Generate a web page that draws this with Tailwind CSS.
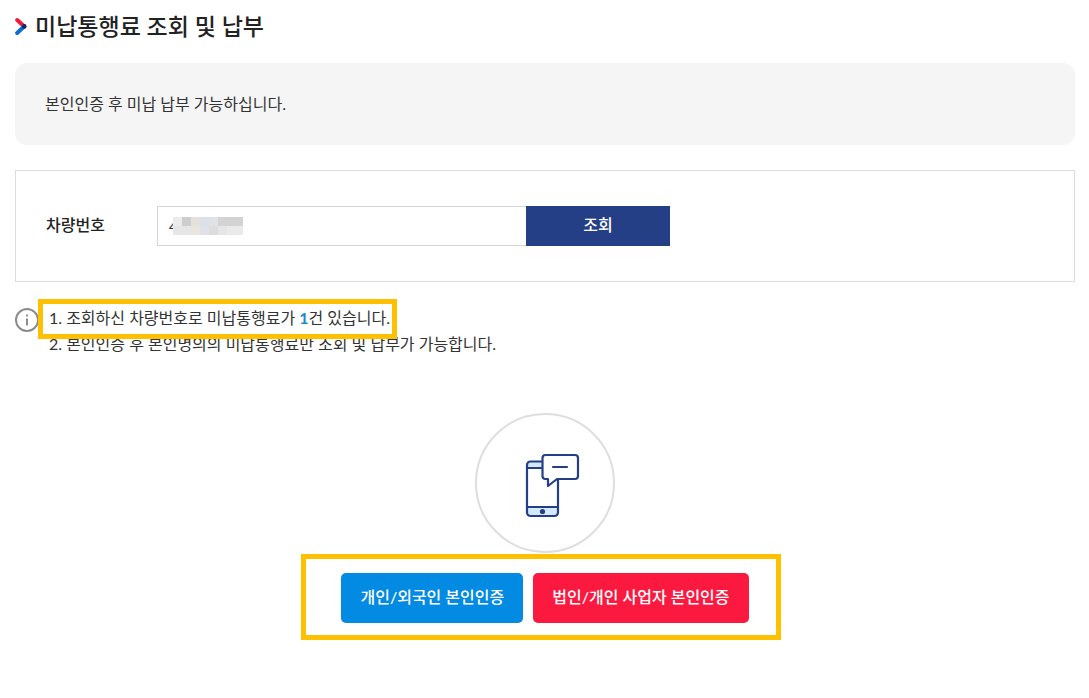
<!DOCTYPE html>
<html lang="ko">
<head>
  <meta charset="UTF-8" />
  <meta name="viewport" content="width=device-width, initial-scale=1.0" />
  <title>미납통행료 조회 및 납부</title>
  <script src="https://cdn.jsdelivr.net/npm/@tailwindcss/browser@4"></script>
</head>
<body class="bg-white text-[#333] font-[Lato,'Noto_Sans_CJK_KR',sans-serif] text-base leading-[26px]">
  <main class="pl-[15px] pr-[14px] pt-2 pb-8">
    <!-- Title -->
    <h1 class="flex items-center gap-2 text-[23px] leading-9 font-medium text-[#222]">
      <svg class="w-3 h-5 shrink-0" viewBox="0 0 12 20" fill="none" stroke-width="4" stroke-linecap="round" aria-hidden="true">
        <path d="M2.200 4l6.800 6.300" stroke="#f0193c" />
        <path d="M2.200 17l6.800-6.500" stroke="#0a6fd0" />
        <circle cx="9.300" cy="10.400" r="2.300" fill="#1b2365" />
      </svg>
      <span>미납통행료 조회 및 납부</span>
    </h1>

    <p class="mt-[19px] rounded-xl bg-[#f5f5f5] px-[30px] py-7">본인인증 후 미납 납부 가능하십니다.</p>

    <!-- Search Form -->
    <form id="searchForm" class="mt-[25px] flex items-center border border-[#dcdcdc] px-[30px] py-[35px]">
      <label for="carNumber" class="w-[111px] shrink-0 pb-0.5 font-medium text-[#222]">차량번호</label>
      <div class="relative w-[369px]">
        <input
          type="text"
          id="carNumber"
          value="4"
          class="block w-full h-10 border border-r-0 border-[#d5d5d5] px-[11px] text-sm outline-none"
        />
        <!-- Masked digits -->
        <svg class="absolute left-4 top-[11px] w-[70px] h-[18px]" viewBox="0 0 70 18" shape-rendering="crispEdges" aria-hidden="true">
          <rect width="70" height="18" fill="#e6e6e6" />
          <rect width="9" height="9" fill="#ececec" />
          <rect x="9" width="9" height="9" fill="#cdcdcd" />
          <rect x="18" width="9" height="9" fill="#e4e0dc" />
          <rect x="27" width="9" height="9" fill="#dce0e8" />
          <rect x="36" width="9" height="9" fill="#dfe2e6" />
          <rect x="45" width="25" height="9" fill="#d3d3d3" />
          <rect x="18" y="9" width="9" height="9" fill="#ebe5e0" />
          <rect x="27" y="9" width="9" height="9" fill="#e0e2e8" />
          <rect x="36" y="9" width="9" height="9" fill="#dcdcdc" />
          <rect x="54" y="9" width="16" height="9" fill="#eaeaea" />
        </svg>
      </div>
      <button type="submit" class="w-36 h-10 bg-[#253f87] pb-0.5 font-medium text-white hover:bg-[#1d3270]">조회</button>
    </form>

    <!-- Result Notes -->
    <div class="mt-[23px] flex items-start gap-[10px]">
      <svg class="mt-[3px] w-6 h-6 shrink-0" viewBox="0 0 24 24" fill="none" stroke="#8c8c8c" stroke-width="2" aria-hidden="true">
        <circle cx="12" cy="12" r="11" />
        <path d="M12 10.500v7M12 6.500v2" />
      </svg>
      <ol>
        <li class="relative w-fit">
          1. 조회하신 차량번호로 미납통행료가 <strong class="font-bold text-[#1a8ad4]">1</strong>건 있습니다.
          <span class="absolute -left-[11px] -right-[7px] -top-[6px] -bottom-2 z-10 border-5 border-[#ffc000]"></span>
        </li>
        <li>2. 본인인증 후 본인명의의 미납통행료만 조회 및 납부가 가능합니다.</li>
      </ol>
    </div>

    <!-- Identity Verification -->
    <div class="mt-14 flex flex-col items-center">
      <div class="flex items-center justify-center w-[140px] h-[140px] rounded-full border-2 border-[#dedede]">
        <svg class="w-[140px] h-[140px] shrink-0" viewBox="0 0 140 140" fill="none" stroke="#253f87" stroke-width="2.200" stroke-linejoin="round" stroke-linecap="round" aria-hidden="true">
          <path d="M52 55v-3a4 4 0 0 1 4-4h12v7z" fill="#d3e8fb" stroke="none" />
          <path d="M52 94h32v6a3 3 0 0 1-3 3H55a3 3 0 0 1-3-3z" fill="#d3e8fb" stroke="none" />
          <path d="M67 48.500H55.500a3.500 3.500 0 0 0-3.500 3.500v47.500a3.500 3.500 0 0 0 3.500 3.500h24a3.500 3.500 0 0 0 3.500-3.500V66M52 55h15M52 94h31" />
          <circle cx="67.500" cy="98.500" r="1.500" fill="#253f87" />
          <path d="M70.500 42h29.500a3 3 0 0 1 3 3v18a3 3 0 0 1-3 3H82l-9 7v-7h-2.500a3 3 0 0 1-3-3V45a3 3 0 0 1 3-3z" fill="#fff" />
          <path d="M78 54h14" />
        </svg>
      </div>
      <div class="relative mt-5 flex gap-[10px]">
        <span class="pointer-events-none absolute -left-10 -right-8 -top-[19px] -bottom-[17px] border-5 border-[#ffc000]"></span>
        <button type="button" id="personalAuth" class="h-[50px] rounded-[5px] bg-[#038ae2] px-[19px] pb-0.5 font-medium text-white hover:bg-[#027bca]">개인/외국인 본인인증</button>
        <button type="button" id="businessAuth" class="h-[50px] rounded-[5px] bg-[#fb193f] px-[19px] pb-0.5 font-medium text-white hover:bg-[#e01236]">법인/개인 사업자 본인인증</button>
      </div>
    </div>
  </main>

  <script>
    const searchForm = document.getElementById("searchForm");

    searchForm.addEventListener("submit", (e) => {
      e.preventDefault();
    });
  </script>
</body>
</html>
